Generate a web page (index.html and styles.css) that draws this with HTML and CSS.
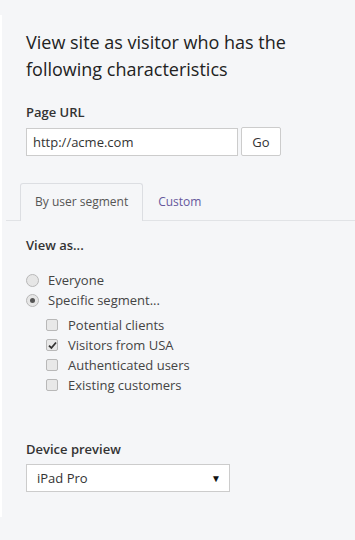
FILE: index.html
```html
<!DOCTYPE html>
<html lang="en">
<head>
    <meta charset="UTF-8">
    <meta name="viewport" content="width=device-width, initial-scale=1.0">
    <title>Preview as visitor</title>
    <link rel="stylesheet" href="styles.css">
</head>
<body>
    <div class="panel">
        <h1 class="title">View site as visitor who has the following characteristics</h1>

        <!-- Page URL -->
        <label class="field-label">Page URL</label>
        <div class="url-row">
            <input class="url-input" type="text" value="http://acme.com">
            <button class="go-button">Go</button>
        </div>

        <!-- Tabs -->
        <div class="tabs">
            <div class="tab active">By user segment</div>
            <div class="tab">Custom</div>
        </div>

        <div class="tab-body">
            <p class="field-label">View as...</p>
            <div class="option">
                <span class="radio"></span>
                <span>Everyone</span>
            </div>
            <div class="option">
                <span class="radio checked"></span>
                <span>Specific segment...</span>
            </div>
            <div class="segments">
                <div class="option">
                    <span class="checkbox"></span>
                    <span>Potential clients</span>
                </div>
                <div class="option">
                    <span class="checkbox checked">
                        <svg width="9" height="9" viewBox="0 0 9 9"><path d="M1 4.6 L3.4 7 L8 1.5" fill="none" stroke="#333" stroke-width="1.8"/></svg>
                    </span>
                    <span>Visitors from USA</span>
                </div>
                <div class="option">
                    <span class="checkbox"></span>
                    <span>Authenticated users</span>
                </div>
                <div class="option">
                    <span class="checkbox"></span>
                    <span>Existing customers</span>
                </div>
            </div>

            <p class="field-label device-label">Device preview</p>
            <div class="select">
                <span>iPad Pro</span>
                <span class="arrow">&#9660;</span>
            </div>
        </div>
    </div>
</body>
</html>
```
FILE: styles.css
```css
/* General */
body {
    margin: 0;
    background-color: #f5f6f8;
    font-family: "Open Sans", Arial, sans-serif;
    color: #333;
}

/* Panel */
.panel {
    margin-top: 15px;
    height: 502px;
    border-left: 2px solid #ffffff;
    box-sizing: border-box;
    padding-top: 14px;
}

.title {
    margin: 0 0 0 24px;
    font-size: 18px;
    font-weight: normal;
    line-height: 27px;
    color: #222;
    width: 300px;
}

.field-label {
    display: block;
    margin: 20px 0 0 24px;
    font-size: 13px;
    font-weight: 600;
    line-height: 18px;
    color: #333;
}

/* URL row */
.url-row {
    display: flex;
    gap: 3px;
    margin: 7px 0 0 24px;
}

.url-input {
    width: 212px;
    height: 28px;
    box-sizing: border-box;
    border: 1px solid #ccc;
    padding: 0 6px;
    font-family: inherit;
    font-size: 13px;
    color: #333;
    background: #fff;
    outline: none;
}

.go-button {
    width: 40px;
    height: 29px;
    margin-top: -1px;
    border: 1px solid #ccc;
    border-radius: 2px;
    background: #fff;
    font-family: inherit;
    font-size: 13px;
    color: #333;
    padding: 0;
}

/* Tabs */
.tabs {
    display: flex;
    margin: 27px 0 0 4px;
    padding-left: 14px;
    border-bottom: 1px solid #e1e3e6;
}

.tab {
    padding: 10px 14px;
    font-size: 12px;
    line-height: 16px;
    color: #65589c;
    border: 1px solid transparent;
    border-bottom: none;
    margin-bottom: -1px;
}

.tab.active {
    color: #555;
    border-color: #dcdee2;
    border-radius: 3px 3px 0 0;
    background: #f5f6f8;
    padding-bottom: 11px;
}

/* Tab body */
.tab-body .field-label {
    margin-top: 15px;
    margin-bottom: 16px;
}

.option {
    display: flex;
    align-items: center;
    gap: 9px;
    margin-left: 24px;
    height: 20px;
    font-size: 13px;
    color: #444;
}

.radio {
    width: 11px;
    height: 11px;
    border: 1px solid #b8b8b8;
    border-radius: 50%;
    background: #e6e6e6;
    position: relative;
}

.radio.checked::after {
    content: "";
    position: absolute;
    left: 3px;
    top: 3px;
    width: 5px;
    height: 5px;
    border-radius: 50%;
    background: #555;
}

.segments {
    margin: 5px 0 0 20px;
}

.segments .option {
    gap: 10px;
}

.checkbox {
    width: 10px;
    height: 10px;
    border: 1px solid #b8b8b8;
    border-radius: 2px;
    background: #e8e8e8;
    display: flex;
    align-items: center;
    justify-content: center;
}

.device-label.field-label {
    margin-top: 45px;
    margin-bottom: 6px;
}

/* Select */
.select {
    display: flex;
    justify-content: space-between;
    align-items: center;
    width: 204px;
    height: 28px;
    box-sizing: border-box;
    margin-left: 24px;
    padding: 0 8px 0 10px;
    border: 1px solid #ccc;
    background: #fff;
    font-size: 13px;
    color: #333;
}

.arrow {
    font-size: 10px;
    color: #111;
}
```
